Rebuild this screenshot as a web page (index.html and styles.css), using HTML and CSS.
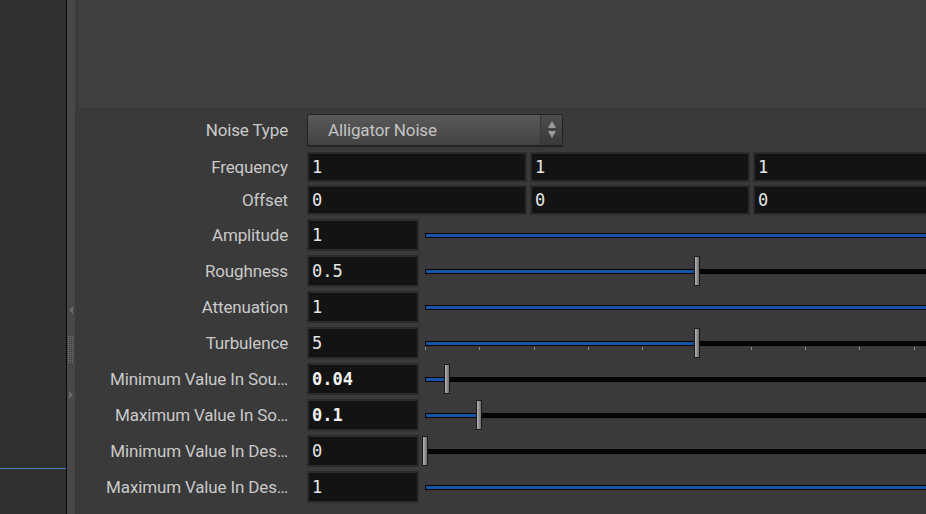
FILE: index.html
```html
<!DOCTYPE html>
<html lang="en">
<head>
    <meta charset="UTF-8">
    <meta name="viewport" content="width=device-width, initial-scale=1.0">
    <title>Noise Parameters</title>
    <link rel="stylesheet" href="styles.css">
</head>
<body>
    <div class="app">
        <aside class="sidebar">
            <div class="sel-line"></div>
        </aside>
        <div class="divider"></div>
        <div class="splitter">
            <svg class="split-arrow" width="4" height="8" viewBox="0 0 4 8"><path d="M4 0 L0 4 L4 8 Z" fill="#6c6c6c"/></svg>
            <svg class="grip" width="6" height="28" viewBox="0 0 6 28">
                <defs>
                    <pattern id="dots" width="2" height="2" patternUnits="userSpaceOnUse">
                        <rect x="0" y="0" width="1" height="1" fill="#777"/>
                    </pattern>
                </defs>
                <rect width="6" height="28" fill="url(#dots)"/>
            </svg>
            <svg class="split-arrow" width="4" height="8" viewBox="0 0 4 8"><path d="M0 0 L4 4 L0 8 Z" fill="#6c6c6c"/></svg>
        </div>

        <main class="panel">
            <div class="viewer"></div>

            <div class="params">
                <div class="row menu-row">
                    <label class="label">Noise Type</label>
                    <div class="menu">
                        <span class="menu-text">Alligator Noise</span>
                        <span class="menu-arrows">
                            <svg width="10" height="20" viewBox="0 0 10 20">
                                <path d="M5 1 L9 8 L1 8 Z" fill="#9a9a9a"/>
                                <path d="M1 11 L9 11 L5 18 Z" fill="#9a9a9a"/>
                            </svg>
                        </span>
                    </div>
                </div>

                <div class="row vec-row">
                    <label class="label">Frequency</label>
                    <div class="field wide">1</div>
                    <div class="field wide">1</div>
                    <div class="field wide">1</div>
                </div>

                <div class="row vec-row offset-row">
                    <label class="label">Offset</label>
                    <div class="field wide">0</div>
                    <div class="field wide">0</div>
                    <div class="field wide">0</div>
                </div>

                <div class="slider-list">
                    <div class="row slider-row">
                        <label class="label">Amplitude</label>
                        <div class="field short">1</div>
                        <div class="slider">
                            <div class="track"><div class="fill" style="width: 100%"></div></div>
                        </div>
                    </div>

                    <div class="row slider-row">
                        <label class="label">Roughness</label>
                        <div class="field short">0.5</div>
                        <div class="slider">
                            <div class="track"><div class="fill" style="width: 50%"></div></div>
                            <div class="handle" style="left: 50%"></div>
                        </div>
                    </div>

                    <div class="row slider-row">
                        <label class="label">Attenuation</label>
                        <div class="field short">1</div>
                        <div class="slider">
                            <div class="track"><div class="fill" style="width: 100%"></div></div>
                        </div>
                    </div>

                    <div class="row slider-row">
                        <label class="label">Turbulence</label>
                        <div class="field short">5</div>
                        <div class="slider ticked">
                            <div class="track"><div class="fill" style="width: 50%"></div></div>
                            <div class="handle" style="left: 50%"></div>
                        </div>
                    </div>

                    <div class="row slider-row">
                        <label class="label">Minimum Value In Sou…</label>
                        <div class="field short bold">0.04</div>
                        <div class="slider">
                            <div class="track"><div class="fill" style="width: 4%"></div></div>
                            <div class="handle" style="left: 4%"></div>
                        </div>
                    </div>

                    <div class="row slider-row">
                        <label class="label">Maximum Value In So…</label>
                        <div class="field short bold">0.1</div>
                        <div class="slider">
                            <div class="track"><div class="fill" style="width: 10%"></div></div>
                            <div class="handle" style="left: 10%"></div>
                        </div>
                    </div>

                    <div class="row slider-row">
                        <label class="label">Minimum Value In Des…</label>
                        <div class="field short">0</div>
                        <div class="slider">
                            <div class="track"><div class="fill" style="width: 0%"></div></div>
                            <div class="handle" style="left: 0%"></div>
                        </div>
                    </div>

                    <div class="row slider-row">
                        <label class="label">Maximum Value In Des…</label>
                        <div class="field short">1</div>
                        <div class="slider">
                            <div class="track"><div class="fill" style="width: 100%"></div></div>
                        </div>
                    </div>
                </div>
            </div>
        </main>
    </div>
</body>
</html>
```

FILE: styles.css
```css
html, body {
    margin: 0;
    padding: 0;
    height: 100%;
    overflow: hidden;
    background-color: #3a3a3a;
}
.app {
    display: flex;
    height: 514px;
    font-family: 'Roboto', 'Liberation Sans', sans-serif;
}

/* Left pane */
.sidebar {
    width: 66px;
    flex-shrink: 0;
    background-color: #303030;
}
.sel-line {
    margin-top: 468px;
    height: 1px;
    background-color: #4a7fc2;
}
.divider {
    width: 1px;
    flex-shrink: 0;
    background-color: #0a0a0a;
}
.splitter {
    width: 8px;
    flex-shrink: 0;
    background-color: #474747;
    display: flex;
    flex-direction: column;
    align-items: center;
    padding-top: 306px;
    box-sizing: border-box;
}
.split-arrow {
    display: block;
}
.grip {
    display: block;
    margin: 22px 0 27px;
}

/* Parameter pane */
.panel {
    flex: 1;
    min-width: 0;
    overflow: hidden;
    background-color: #3a3a3a;
}
.viewer {
    height: 108px;
    margin-left: 4px;
    background-color: #404040;
}
.params {
    padding-top: 6px;
    padding-left: 4px;
}
.row {
    display: flex;
    align-items: center;
    white-space: nowrap;
}
.label {
    width: 209px;
    flex-shrink: 0;
    margin-right: 19px;
    text-align: right;
    font-size: 17px;
    letter-spacing: -0.15px;
    color: #c9c9c9;
}

/* Menu */
.menu {
    display: flex;
    width: 256px;
    height: 32px;
    box-sizing: border-box;
    border: 1px solid #222;
    border-radius: 2px;
    background: linear-gradient(#595959, #424242);
    box-shadow: 0 1px 1px rgba(0, 0, 0, 0.4);
}
.menu-text {
    flex: 1;
    padding-left: 20px;
    line-height: 31px;
    font-size: 17px;
    letter-spacing: -0.15px;
    color: #c4c4c4;
}
.menu-arrows {
    width: 21px;
    display: flex;
    align-items: center;
    justify-content: center;
    border-left: 1px solid #383838;
    background: linear-gradient(#4c4c4c, #3a3a3a);
}

/* Fields */
.field {
    flex-shrink: 0;
    box-sizing: border-box;
    background-color: #131313;
    border: 2px solid #2b2b2b;
    padding-left: 3px;
    font-family: 'DejaVu Sans Mono', monospace;
    font-size: 17px;
    color: #e6e6e6;
}
.field.bold {
    font-weight: bold;
    color: #f2f2f2;
}
.vec-row {
    margin-top: 6px;
}
.offset-row {
    margin-top: 3px;
}
.field.wide {
    width: 220px;
    height: 30px;
    line-height: 26px;
    margin-right: 3px;
}
.slider-list {
    display: flex;
    flex-direction: column;
    gap: 4px;
    margin-top: 4px;
}
.field.short {
    width: 112px;
    height: 32px;
    line-height: 28px;
}

/* Sliders */
.slider {
    position: relative;
    flex-shrink: 0;
    width: 543px;
    height: 32px;
    margin-left: 6px;
    display: flex;
    align-items: center;
}
.track {
    width: 100%;
    height: 5px;
    box-sizing: border-box;
    border: 1px solid #000;
    background-color: #050505;
}
.fill {
    height: 100%;
    background-color: #1656a6;
}
.ticked::after {
    content: "";
    position: absolute;
    left: 0;
    right: 0;
    top: 20px;
    height: 3px;
    background-image: repeating-linear-gradient(to right, #8c8c8c 0 1px, transparent 1px 54.3px);
}
.handle {
    position: absolute;
    top: 1px;
    width: 6px;
    height: 30px;
    margin-left: -3px;
    box-sizing: border-box;
    border: 1px solid #1a1a1a;
    background: linear-gradient(to right, #b4b4b4, #8a8a8a 60%, #6a6a6a);
    z-index: 1;
}
```
